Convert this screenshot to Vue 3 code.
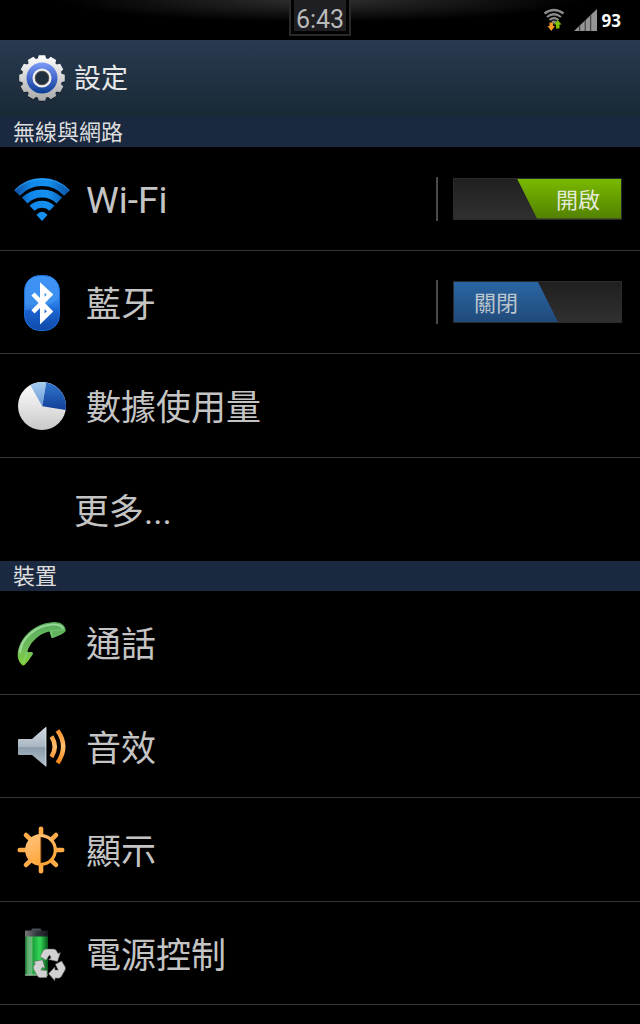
<script setup>
import { reactive } from 'vue'

const sections = reactive([
    {
        title: '無線與網路',
        items: [
            { icon: 'wifi', label: 'Wi-Fi', latin: true, toggle: true, on: true },
            { icon: 'bluetooth', label: '藍牙', toggle: true, on: false },
            { icon: 'data', label: '數據使用量' },
            { icon: '', label: '更多...' }
        ]
    },
    {
        title: '裝置',
        items: [
            { icon: 'call', label: '通話' },
            { icon: 'sound', label: '音效' },
            { icon: 'display', label: '顯示' },
            { icon: 'power', label: '電源控制' }
        ]
    }
])

// outline of a cog with 12 teeth, centered on 28,28
const cogPath = () => {
    const points = []
    for (let i = 0; i < 12; i++) {
        const steps = [[-12, 20], [-8, 23], [8, 23], [12, 20]]
        for (const [offset, r] of steps) {
            const a = (i * 30 + offset) * Math.PI / 180
            points.push((28 + r * Math.sin(a)).toFixed(2) + ' ' + (28 - r * Math.cos(a)).toFixed(2))
        }
    }
    return 'M' + points.join('L') + 'Z'
}
const cog = cogPath()
const rays = [0, 45, 90, 135, 180, 225, 270, 315]
</script>

<template>
    <div class="screen">
        <div class="statusBar">
            <div class="clock"><span>6:43</span></div>
            <div class="statusIcons">
                <svg class="netIcon" width="24" height="24" viewBox="0 0 24 24" aria-hidden="true">
                    <g fill="none" stroke="#8c8c8c" stroke-width="2.2">
                        <path d="M2.5 5.5Q12 -1.5 21.5 5.5" />
                        <path d="M5 9Q12 3.5 19 9" />
                        <path d="M7.5 12Q12 8.3 16.5 12" />
                    </g>
                    <path d="M9.3 13.5Q12 11.5 14.7 13.5L12 16Z" fill="#8c8c8c" />
                    <path d="M7.5 14.5H11V18H13L9.3 23L5.5 18H7.5Z" fill="#f79a26" />
                    <path d="M14 20.5V16.5H12L15.6 12L19.5 16.5H17.5V20.5Z" fill="#7dc100" />
                </svg>
                <svg class="signalIcon" width="24" height="24" viewBox="0 0 24 24" aria-hidden="true">
                    <path d="M0 23L23 1V23Z" fill="#949494" />
                    <path d="M5.7 17V23M11.2 12V23M16.7 6V23" stroke="#333" stroke-width="1" />
                </svg>
                <span class="battery">93</span>
            </div>
        </div>

        <header class="titleBar">
            <svg class="titleIcon" width="56" height="56" viewBox="0 0 56 56" aria-hidden="true">
                <defs>
                    <linearGradient id="cogBody" x1="0" y1="0" x2="0" y2="1">
                        <stop offset="0" stop-color="#fff" />
                        <stop offset="1" stop-color="#a9a9a9" />
                    </linearGradient>
                    <linearGradient id="cogBlue" x1="0" y1="0" x2="0" y2="1">
                        <stop offset="0" stop-color="#7e9cf8" />
                        <stop offset=".5" stop-color="#4468cc" />
                        <stop offset="1" stop-color="#0b3f92" />
                    </linearGradient>
                </defs>
                <path :d="cog" fill="#0b141d" opacity=".6" transform="translate(0 1)" />
                <path :d="cog" fill="url(#cogBody)" />
                <circle cx="28" cy="28" r="15.5" fill="url(#cogBlue)" />
                <circle cx="28" cy="28" r="8.3" fill="#1f2f3e" stroke="#eee" stroke-width="2.5" />
                <circle cx="28" cy="28" r="6.8" fill="none" stroke="#555" stroke-width="1" />
            </svg>
            <h1>設定</h1>
        </header>

        <main>
            <section v-for="section in sections" :key="section.title">
                <h2>{{ section.title }}</h2>
                <ul>
                    <li v-for="item in section.items" :key="item.label" class="row">
                        <button type="button" class="entry" :class="{ plain: !item.icon }">
                            <svg v-if="item.icon" class="icon" width="60" height="60" viewBox="0 0 60 60" aria-hidden="true">
                                <g v-if="item.icon === 'wifi'">
                                    <defs>
                                        <linearGradient id="wifiBlue" gradientUnits="userSpaceOnUse" x1="3" y1="24" x2="57" y2="24">
                                            <stop offset="0" stop-color="#0c4f9f" />
                                            <stop offset=".3" stop-color="#1187ea" />
                                            <stop offset=".6" stop-color="#1590f0" />
                                            <stop offset="1" stop-color="#0b55aa" />
                                        </linearGradient>
                                    </defs>
                                    <g fill="none" stroke="url(#wifiBlue)" stroke-width="8">
                                        <path d="M5 24A34 34 0 0 1 55 24" />
                                        <path d="M12.7 31.5A25 25 0 0 1 47.3 31.5" />
                                        <path d="M20 39.2A14.5 14.5 0 0 1 40 39.2" stroke-width="7" />
                                    </g>
                                    <path d="M24.5 46Q30 39.5 35.5 46L30 52Z" fill="#1590f0" />
                                    <path d="M3 21.2A38 38 0 0 1 57 21.2" fill="none" stroke="#3cabfa" stroke-width="1" opacity=".6" />
                                </g>
                                <g v-else-if="item.icon === 'bluetooth'">
                                    <defs>
                                        <linearGradient id="btBlue" x1="0" y1="0" x2="0" y2="1">
                                            <stop offset="0" stop-color="#2f86f5" />
                                            <stop offset=".5" stop-color="#2b80e8" />
                                            <stop offset=".65" stop-color="#1a62cf" />
                                            <stop offset="1" stop-color="#104aa8" />
                                        </linearGradient>
                                    </defs>
                                    <rect x="12.5" y="3.5" width="35" height="55" rx="15" fill="url(#btBlue)" stroke="#1c6fd8" />
                                    <path d="M13 38V19Q13 4 30 4Q47 4 47 19V26Q36 36 13 38Z" fill="#5aabfa" opacity=".35" />
                                    <path d="M21 22L38 39.5L30.3 47V15.5L38 22.5L21 39.8" fill="none" stroke="#fff" stroke-width="4.6" stroke-miterlimit="10" />
                                </g>
                                <g v-else-if="item.icon === 'data'">
                                    <defs>
                                        <linearGradient id="pieWhite" x1="0" y1="0" x2="0" y2="1">
                                            <stop offset="0" stop-color="#fff" />
                                            <stop offset="1" stop-color="#c9c9c9" />
                                        </linearGradient>
                                        <linearGradient id="pieBlue" x1="0" y1="0" x2="0" y2="1">
                                            <stop offset="0" stop-color="#3276cf" />
                                            <stop offset="1" stop-color="#123f97" />
                                        </linearGradient>
                                        <linearGradient id="pieLight" x1="0" y1="0" x2="0" y2="1">
                                            <stop offset="0" stop-color="#a9cdf0" />
                                            <stop offset="1" stop-color="#6698d6" />
                                        </linearGradient>
                                    </defs>
                                    <circle cx="30" cy="30" r="24" fill="url(#pieWhite)" />
                                    <path d="M30.3 30.3L18.2 9.1A24 24 0 0 1 34.2 6.4Z" fill="url(#pieLight)" />
                                    <path d="M30.3 30.3L34.2 6.4A24 24 0 0 1 53.7 34Z" fill="url(#pieBlue)" />
                                </g>
                                <g v-else-if="item.icon === 'call'">
                                    <defs>
                                        <linearGradient id="callGreen" x1="0" y1="0" x2="0" y2="1">
                                            <stop offset="0" stop-color="#57ad5e" />
                                            <stop offset=".6" stop-color="#71bd5c" />
                                            <stop offset="1" stop-color="#80cf3c" />
                                        </linearGradient>
                                    </defs>
                                    <path d="M40 9.2C48 8.5 54 12 53.7 18C51 21.5 46 23 41 25Q39.500 25.500 39 23.500L37.500 18.500C28 20 17 30 15.500 39L19.500 39Q21.500 39 20.700 41.500C18 45.500 15 50 12.500 52Q11 53 9.500 51.500C6.500 48 5.500 45 5.700 41C7 25 22 10.500 40 9.200Z" fill="url(#callGreen)" />
                                    <path d="M8 39C9.5 26 23 12.800 40 11.500C46 11 49 12.500 51 15" fill="none" stroke="#b4e8b0" stroke-width="2" stroke-linecap="round" opacity=".7" />
                                    <path d="M40.5 24.5L38.5 18L52 16.5M15 39L11 50" fill="none" stroke="#8fe08a" stroke-width="1.2" opacity=".5" />
                                </g>
                                <g v-else-if="item.icon === 'sound'">
                                    <defs>
                                        <linearGradient id="hornGrey" x1="0" y1="0" x2="0" y2="1">
                                            <stop offset="0" stop-color="#d5dce3" />
                                            <stop offset=".5" stop-color="#a9b6c2" />
                                            <stop offset=".52" stop-color="#8d9dab" />
                                            <stop offset="1" stop-color="#b3c1cd" />
                                        </linearGradient>
                                        <linearGradient id="waveOrange" gradientUnits="userSpaceOnUse" x1="0" y1="12" x2="0" y2="49">
                                            <stop offset="0" stop-color="#f98a22" />
                                            <stop offset=".5" stop-color="#ffc070" />
                                            <stop offset="1" stop-color="#f47c0c" />
                                        </linearGradient>
                                    </defs>
                                    <path d="M6 24Q6 23 7 23H20L34.3 10.5V51L20 39H7Q6 39 6 38Z" fill="url(#hornGrey)" />
                                    <path d="M33.8 12V50" stroke="#e0e6eb" stroke-width="1" opacity=".7" />
                                    <g fill="none" stroke="url(#waveOrange)" stroke-width="4.5">
                                        <path d="M39.5 20.5Q46 30.5 39.5 41" />
                                        <path d="M45.5 14.5Q57 30.5 45.5 47" />
                                    </g>
                                </g>
                                <g v-else-if="item.icon === 'display'">
                                    <defs>
                                        <linearGradient id="sunOrange" gradientUnits="userSpaceOnUse" x1="12" y1="8" x2="34" y2="54">
                                            <stop offset="0" stop-color="#ffc88a" />
                                            <stop offset=".55" stop-color="#ffb154" />
                                            <stop offset="1" stop-color="#ff9a1e" />
                                        </linearGradient>
                                    </defs>
                                    <path v-for="angle in rays" :key="angle" d="M29 15.5V8.8" stroke="#ffac48" stroke-width="4.6" stroke-linecap="round" :transform="`rotate(${angle} 29 30)`" />
                                    <circle cx="29" cy="30" r="14.3" fill="#000" stroke="url(#sunOrange)" stroke-width="3.2" />
                                    <path d="M29 15A15 15 0 0 0 29 45Z" fill="url(#sunOrange)" />
                                    <path d="M29 17V43" stroke="#5b2c00" stroke-width="1" />
                                </g>
                                <g v-else>
                                    <defs>
                                        <linearGradient id="cellGreen" x1="0" y1="0" x2="1" y2="0">
                                            <stop offset="0" stop-color="#12692b" />
                                            <stop offset=".12" stop-color="#5fae6f" />
                                            <stop offset=".28" stop-color="#6bbb7c" />
                                            <stop offset=".36" stop-color="#1ba53b" />
                                            <stop offset=".65" stop-color="#35d757" />
                                            <stop offset="1" stop-color="#06561a" />
                                        </linearGradient>
                                        <linearGradient id="cellCap" x1="0" y1="0" x2="1" y2="0">
                                            <stop offset="0" stop-color="#777" />
                                            <stop offset=".5" stop-color="#333840" />
                                            <stop offset="1" stop-color="#15171a" />
                                        </linearGradient>
                                    </defs>
                                    <path d="M19 8L20 5.5H28.5L29.5 8Z" fill="#4a4e54" />
                                    <rect x="13" y="7.5" width="23" height="7" rx="1" fill="url(#cellCap)" />
                                    <rect x="13" y="13.5" width="23" height="39" fill="url(#cellGreen)" />
                                    <path d="M13 52H36" stroke="#9fb8a5" stroke-width="1.2" />
                                    <path v-for="angle in [0, 120, 240]" :key="angle" d="M-9.5 -8.5L-6.500 -14Q-5.500 -16 -3.500 -16H4Q6 -16 7 -14.300L8.500 -11.500L11 -12.500L8 -3.500L-1 -5.500L1.500 -7.300L0 -10L-3.500 -4.700Z" fill="#d2d2d2" stroke="#555b55" stroke-width=".5" stroke-linejoin="round" :transform="`translate(37.5 42) rotate(${angle})`" />
                                </g>
                            </svg>
                            <span class="label" :class="{ latin: item.latin }">{{ item.label }}</span>
                        </button>
                        <label v-if="item.toggle" class="toggle">
                            <input v-model="item.on" type="checkbox" role="switch" :aria-label="item.label">
                            <span class="track">
                                <span class="thumb">{{ item.on ? '開啟' : '關閉' }}</span>
                            </span>
                        </label>
                    </li>
                </ul>
            </section>
        </main>
    </div>
</template>

<style>
html, body {
    margin: 0;
    background: #000;
}
</style>

<style scoped>
.screen {
    background: #000;
    color: #c4c4c4;
    font-family: Roboto, "Noto Sans CJK TC", sans-serif;
}

.statusBar {
    display: grid;
    grid-template-columns: 1fr auto 1fr;
    height: 40px;
    background: radial-gradient(ellipse 260px 22px at 50% 0, #303030, #000);
}

.clock {
    grid-column: 2;
    box-sizing: border-box;
    height: 36px;
    padding: 0 3px 3px;
    border: 2px solid #292929;
    border-top: none;
    background: #030303;
}

.clock span {
    display: block;
    height: 31px;
    padding: 0 2px;
    background: #1e1e23;
    color: #bababa;
    font-size: 25px;
    line-height: 40px;
}

.statusIcons {
    display: flex;
    align-items: center;
    justify-content: flex-end;
    padding-right: 19px;
}

.signalIcon {
    margin: 0 4px 0 8px;
}

.battery {
    color: #fff;
    font-family: "Open Sans", sans-serif;
    font-size: 17px;
    font-weight: 700;
}

.titleBar {
    display: flex;
    align-items: center;
    gap: 4px;
    height: 77px;
    padding-left: 14px;
    background: linear-gradient(#293a51, #192935);
}

.titleIcon {
    margin-bottom: 2px;
}

h1 {
    margin: 0;
    color: #e8e8e8;
    font-size: 27px;
    font-weight: 400;
    line-height: 40px;
}

h2 {
    margin: 0;
    padding: 2px 0 0 13px;
    background: #1a2940;
    color: #dedede;
    font-size: 22px;
    font-weight: 400;
    line-height: 28px;
}

ul {
    margin: 0;
    padding: 0;
    list-style: none;
}

.row {
    display: flex;
    align-items: center;
    box-sizing: border-box;
    height: 104px;
    border-bottom: 1px solid #353535;
}

.row:nth-child(even) {
    height: 103px;
}

section:first-child .row:last-child {
    border-bottom-color: transparent;
}

.entry {
    display: flex;
    flex: 1;
    align-items: center;
    gap: 14px;
    height: 100%;
    padding: 0 0 0 12px;
    border: none;
    background: none;
    color: inherit;
    font-family: inherit;
    font-size: 35px;
    text-align: left;
    cursor: pointer;
}

.entry.plain {
    padding-left: 74px;
}

.label {
    padding-bottom: 2px;
}

.label.latin {
    padding: 4px 0 0;
    font-size: 37px;
}

.toggle {
    display: flex;
    align-items: center;
    height: 44px;
    margin-right: 18px;
    padding-left: 15px;
    border-left: 2px solid #4a4a4a;
    cursor: pointer;
}

.toggle input {
    position: absolute;
    opacity: 0;
}

.track {
    display: flex;
    box-sizing: border-box;
    width: 169px;
    height: 42px;
    border: 1px solid #2b2b2b;
    background: linear-gradient(#202020, #303030);
}

.thumb {
    box-sizing: border-box;
    width: 104px;
    padding-left: 20px;
    background: linear-gradient(#2a66a3, #204a7a);
    clip-path: polygon(0 0, 84px 0, 100% 100%, 0 100%);
    color: #bcc4cc;
    font-size: 22px;
    line-height: 44px;
}

input:checked + .track {
    justify-content: flex-end;
}

input:checked + .track .thumb {
    padding-left: 39px;
    background: linear-gradient(#79b900, #528100);
    clip-path: polygon(0 0, 100% 0, 100% 100%, 20px 100%);
    color: #e4ead8;
}

input:focus-visible + .track {
    outline: 2px solid #3f8fd8;
}
</style>
